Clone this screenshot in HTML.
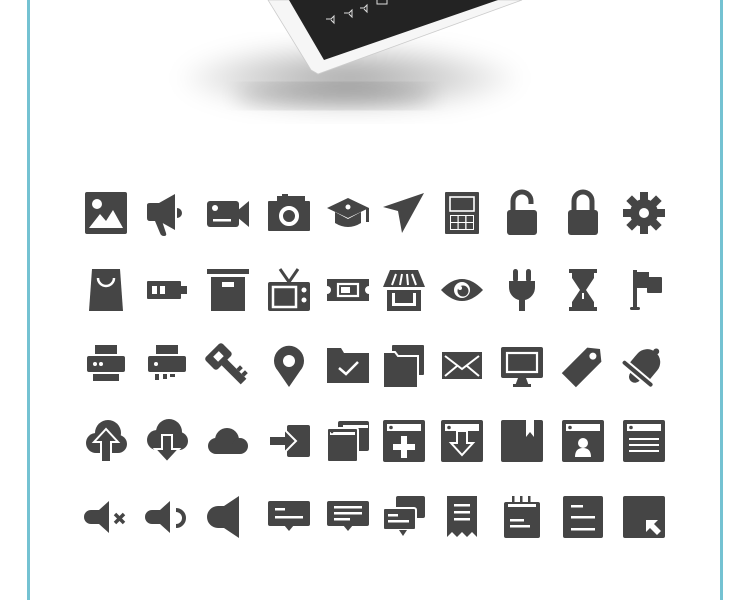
<!DOCTYPE html>
<html><head><meta charset="utf-8"><style>
html,body{margin:0;padding:0;background:#fff;width:750px;height:600px;overflow:hidden}
</style></head><body>
<svg width="750" height="600" viewBox="0 0 750 600" xmlns="http://www.w3.org/2000/svg">
<defs>
<radialGradient id="sh" cx="0.5" cy="0.5" r="0.5">
<stop offset="0" stop-color="#000" stop-opacity="0.35"/>
<stop offset="0.6" stop-color="#000" stop-opacity="0.15"/>
<stop offset="1" stop-color="#000" stop-opacity="0"/>
</radialGradient>
<filter id="bl"><feGaussianBlur stdDeviation="10"/></filter>
</defs>
<rect x="27" y="0" width="3" height="600" fill="#74c2d2"/>
<rect x="720" y="0" width="3" height="600" fill="#74c2d2"/>
<!-- shadow -->
<ellipse cx="350" cy="78" rx="175" ry="38" fill="url(#sh)" filter="url(#bl)"/>
<ellipse cx="335" cy="96" rx="100" ry="12" fill="#000" opacity="0.18" filter="url(#bl)"/>
<!-- tablet -->
<polygon points="268,0 522,0 318,74 311,70" fill="#f6f6f6" stroke="#ccc" stroke-width="0.8"/>
<polygon points="289,0 498,0 324,60" fill="#232323"/>
<g fill="none" stroke="#ddd" stroke-width="1"><path d="M326,19 h5 l3,-3 v7 l-3,-3"/><path d="M344,13 h5 l3,-3 v7 l-3,-3"/><path d="M360,8 h4 l3,-3 v7 l-3,-3"/><rect x="377" y="-3" width="10" height="7"/></g>
<g fill="#454545">
<!-- ROW 1 -->
<g transform="translate(106,213)"><rect x="-21" y="-21" width="42" height="42" rx="2"/><circle cx="-9" cy="-9" r="5" fill="#fff"/><polygon points="-17,15 -6,1 0,8 7,-3 17,15" fill="#fff"/></g>
<g transform="translate(167,213)"><path d="M-20,-8 Q-20,-10 -17,-10 H-8 L8,-19 V17 L-8,8 H-5 L-1,20 Q0,23 -3,23 Q-6,23 -7,20 L-12,8 H-17 Q-20,8 -20,5Z"/><path d="M10,-5 A5,5 0 0 1 10,5Z"/></g>
<g transform="translate(228,213)"><rect x="-21" y="-12" width="32" height="26" rx="3"/><polygon points="9,-2 21,-12 21,14 9,4"/><circle cx="-13" cy="-5" r="3" fill="#fff"/><rect x="-15" y="6" width="18" height="2.5" fill="#fff"/></g>
<g transform="translate(289,213)"><rect x="-21" y="-12" width="42" height="30" rx="1"/><rect x="-12" y="-17" width="28" height="7"/><rect x="-7" y="-19" width="6" height="3"/><circle cx="0" cy="3" r="8" fill="none" stroke="#fff" stroke-width="4"/></g>
<g transform="translate(348,213)"><polygon points="-21,-5 0,-15 21,-5 0,5"/><path d="M-13,-1 L0,6 L13,-1 V10 Q0,18 -13,10Z"/><rect x="18" y="-5" width="3" height="14"/><circle cx="0" cy="-6" r="2.5" fill="#fff"/></g>
<g transform="translate(404,213)"><polygon points="-21,-6 20,-20 -2,20 -6,-2"/></g>
<g transform="translate(462,213)"><rect x="-17" y="-21" width="34" height="42" rx="1"/><rect x="-12" y="-16" width="24" height="14" fill="none" stroke="#fff" stroke-width="1.6"/><rect x="-12" y="2" width="24" height="15" fill="#fff"/><g><rect x="-11" y="3" width="6.5" height="6"/><rect x="-3.3" y="3" width="6.5" height="6"/><rect x="4.5" y="3" width="6.5" height="6"/><rect x="-11" y="10" width="6.5" height="6"/><rect x="-3.3" y="10" width="6.5" height="6"/><rect x="4.5" y="10" width="6.5" height="6"/></g></g>
<g transform="translate(522,213)"><rect x="-15" y="-3" width="30" height="25" rx="3"/><path d="M-9,-3 V-12 A9,9 0 0 1 9,-12 V-9" fill="none" stroke="#454545" stroke-width="5"/></g>
<g transform="translate(583,213)"><rect x="-15" y="-3" width="30" height="25" rx="3"/><path d="M-9,-1 V-12 A9,9 0 0 1 9,-12 V-1" fill="none" stroke="#454545" stroke-width="5"/></g>
<g transform="translate(644,213)"><circle r="14"/><g><rect x="-4" y="-21" width="8" height="42"/><rect x="-4" y="-21" width="8" height="42" transform="rotate(45)"/><rect x="-4" y="-21" width="8" height="42" transform="rotate(90)"/><rect x="-4" y="-21" width="8" height="42" transform="rotate(135)"/></g><circle r="5" fill="#fff"/></g>
<!-- ROW 2 -->
<g transform="translate(106,290)"><polygon points="-14,-21 14,-21 17,21 -17,21"/><path d="M-8,-12 A8,8 0 0 0 8,-12" fill="none" stroke="#fff" stroke-width="2.5"/></g>
<g transform="translate(167,290)"><rect x="-20" y="-9" width="34" height="18" rx="1"/><rect x="13" y="-4" width="7" height="8"/><rect x="-15" y="-4" width="5" height="8" fill="#fff"/><rect x="-7" y="-4" width="5" height="8" fill="#fff"/></g>
<g transform="translate(228,290)"><rect x="-21" y="-21" width="42" height="5"/><rect x="-17" y="-13" width="34" height="34"/><rect x="-6" y="-8" width="12" height="5" fill="#fff"/></g>
<g transform="translate(289,290)"><path d="M-9,-21 L0,-8 L9,-21" fill="none" stroke="#454545" stroke-width="3"/><rect x="-21" y="-8" width="42" height="29" rx="2"/><rect x="-16" y="-3" width="23" height="20" fill="none" stroke="#fff" stroke-width="2.5"/><circle cx="15" cy="0" r="2.5" fill="#fff"/><circle cx="15" cy="10" r="2.5" fill="#fff"/></g>
<g transform="translate(348,290)"><path d="M-21,-11 H21 V-4 A4,4 0 0 0 21,4 V11 H-21 V4 A4,4 0 0 0 -21,-4Z"/><rect x="-10" y="-6" width="20" height="12" fill="none" stroke="#fff" stroke-width="2.2"/><rect x="-7" y="-3" width="9" height="6" fill="#fff"/></g>
<g transform="translate(404,290)"><polygon points="-14,-20 14,-20 21,-3 -21,-3"/><g stroke="#fff" stroke-width="2"><line x1="-8" y1="-16" x2="-12" y2="-5"/><line x1="-2" y1="-16" x2="-4" y2="-5"/><line x1="3" y1="-16" x2="4" y2="-5"/><line x1="8" y1="-16" x2="12" y2="-5"/></g><rect x="-17" y="0" width="34" height="21"/><rect x="-12" y="3" width="24" height="13" fill="#fff"/><rect x="-9" y="3" width="18" height="10"/></g>
<g transform="translate(462,290)"><path d="M-21,0 Q0,-22 21,0 Q0,22 -21,0Z"/><circle r="8" fill="#fff"/><circle cx="1" cy="1" r="5.5"/><circle cx="-2" cy="-2" r="2" fill="#fff"/></g>
<g transform="translate(522,290)"><rect x="-9" y="-21" width="5" height="13" rx="2.5"/><rect x="4" y="-21" width="5" height="13" rx="2.5"/><path d="M-13,-9 H13 V-3 A13,13 0 0 1 3,10 V21 H-3 V10 A13,13 0 0 1 -13,-3Z"/></g>
<g transform="translate(583,290)"><rect x="-14" y="-21" width="28" height="4"/><rect x="-14" y="17" width="28" height="4"/><polygon points="-11,-17 11,-17 11,-12 3,0 11,12 11,17 -11,17 -11,12 -3,0 -11,-12"/><rect x="-1" y="3" width="2" height="6" fill="#fff"/></g>
<g transform="translate(644,290)"><rect x="-11" y="-20" width="4" height="38"/><rect x="-14" y="17" width="10" height="3" rx="1.5"/><rect x="-8" y="-18" width="13" height="16"/><rect x="3" y="-13" width="15" height="16" rx="1"/></g>
<!-- ROW 3 -->
<g transform="translate(106,366)"><rect x="-11" y="-21" width="22" height="9"/><rect x="-19" y="-10" width="38" height="16" rx="2"/><rect x="-13" y="8" width="26" height="7"/><circle cx="-11" cy="-2" r="2" fill="#fff"/><circle cx="-5" cy="-2" r="2" fill="#fff"/></g>
<g transform="translate(167,366)"><rect x="-11" y="-21" width="22" height="9"/><rect x="-19" y="-10" width="38" height="16" rx="2"/><circle cx="-11" cy="-2" r="2" fill="#fff"/><rect x="-12" y="8" width="4" height="6"/><rect x="-4" y="8" width="4" height="5"/><rect x="3" y="8" width="5" height="3"/></g>
<g transform="translate(228,366) rotate(-45)"><rect x="-12" y="-22" width="24" height="17" rx="3"/><rect x="-4" y="-17" width="8" height="7" fill="#fff"/><rect x="-4" y="-6" width="8" height="28"/><rect x="4" y="8" width="5" height="4"/><rect x="4" y="15" width="5" height="4"/></g>
<g transform="translate(289,366)"><path d="M0,21 L-11,5 A15,15 0 1 1 11,5Z"/><circle cx="0" cy="-5" r="6" fill="#fff"/></g>
<g transform="translate(348,366)"><path d="M-21,-18 H-7 L-4,-13 H21 V17 H-21Z"/><polyline points="-9,2 -2,8 10,-4" fill="none" stroke="#fff" stroke-width="2.5"/></g>
<g transform="translate(404,366)"><rect x="-12" y="-21" width="32" height="30" rx="1"/><path d="M-21,-14 H-9 L-6,-10 H14 V22 H-21Z" stroke="#fff" stroke-width="2"/></g>
<g transform="translate(462,366)"><rect x="-20" y="-14" width="40" height="27"/><polyline points="-17,-10 0,3 17,-10" fill="none" stroke="#fff" stroke-width="2"/><line x1="-17" y1="10" x2="-5" y2="0" stroke="#fff" stroke-width="2"/><line x1="17" y1="10" x2="5" y2="0" stroke="#fff" stroke-width="2"/></g>
<g transform="translate(522,366)"><rect x="-21" y="-19" width="42" height="31" rx="2"/><rect x="-15" y="-13" width="30" height="19" fill="none" stroke="#fff" stroke-width="2.2"/><polygon points="-4,12 4,12 7,20 -7,20"/><rect x="-9" y="18" width="18" height="3"/></g>
<g transform="translate(583,366) rotate(45)"><path d="M-10,-16 L0,-24 L10,-16 V20 H-10Z"/><circle cx="0" cy="-14" r="3.5" fill="#fff"/></g>
<g transform="translate(644,366) rotate(40)"><path d="M-13,6 V-5 A13,13 0 0 1 13,-5 V6Z"/><circle cx="0" cy="-19" r="3"/><rect x="-19" y="8" width="38" height="4" rx="2"/><path d="M-6,14 A6,6 0 0 0 6,14Z"/></g>
<!-- ROW 4 -->
<g transform="translate(106,441)"><circle cx="-10" cy="2" r="10"/><circle cx="2" cy="-8" r="13"/><circle cx="12" cy="3" r="9"/><rect x="-10" y="2" width="22" height="10"/><polygon points="0,-12 -12,1 -5,1 -5,21 5,21 5,1 12,1" stroke="#fff" stroke-width="2"/></g>
<g transform="translate(167,441)"><circle cx="-10" cy="-1" r="10"/><circle cx="2" cy="-9" r="13"/><circle cx="12" cy="0" r="9"/><rect x="-10" y="-1" width="22" height="10"/><polygon points="-5,-6 5,-6 5,8 12,8 0,21 -12,8 -5,8" stroke="#fff" stroke-width="2"/></g>
<g transform="translate(228,441)"><circle cx="-12" cy="5" r="8"/><circle cx="-1" cy="-1" r="12"/><circle cx="12" cy="5" r="8"/><rect x="-12" y="4" width="24" height="9"/></g>
<g transform="translate(289,441)"><rect x="-2" y="-16" width="23" height="32" rx="2"/><polygon points="-20,-5 -5,-5 -5,-12 7,0 -5,12 -5,5 -20,5" stroke="#fff" stroke-width="2"/></g>
<g transform="translate(348,441)"><rect x="-10" y="-20" width="31" height="30" rx="2"/><rect x="-5" y="-16" width="25" height="3" fill="#fff"/><rect x="-21" y="-13" width="31" height="34" rx="2" stroke="#fff" stroke-width="2"/><rect x="-18" y="-9" width="25" height="3" fill="#fff"/><circle cx="-16" cy="-9" r="1.3"/></g>
<g transform="translate(404,441)"><rect x="-21" y="-21" width="42" height="42" rx="2"/><rect x="-17" y="-17" width="34" height="7" fill="#fff"/><circle cx="-13" cy="-13.5" r="1.8"/><path d="M-3,-5 H3 V3 H11 V9 H3 V17 H-3 V9 H-11 V3 H-3Z" fill="#fff"/></g>
<g transform="translate(462,441)"><rect x="-21" y="-21" width="42" height="42" rx="2"/><rect x="-17" y="-17" width="34" height="7" fill="#fff"/><circle cx="-13" cy="-13.5" r="1.8"/><polygon points="-5,-10 5,-10 5,2 11,2 0,14 -11,2 -5,2" stroke="#fff" stroke-width="2"/></g>
<g transform="translate(522,441)"><rect x="-21" y="-21" width="42" height="42" rx="2"/><polygon points="4,-21 12,-21 12,-4 8,-9 4,-4" fill="#fff"/></g>
<g transform="translate(583,441)"><rect x="-21" y="-21" width="42" height="42" rx="2"/><rect x="-17" y="-17" width="34" height="7" fill="#fff"/><circle cx="-13" cy="-13.5" r="1.8"/><circle cx="0" cy="2" r="5" fill="#fff"/><path d="M-8,16 Q-8,7 0,7 Q8,7 8,16Z" fill="#fff"/></g>
<g transform="translate(644,441)"><rect x="-21" y="-21" width="42" height="42" rx="2"/><rect x="-17" y="-17" width="34" height="7" fill="#fff"/><circle cx="-13" cy="-13.5" r="1.8"/><g fill="#fff"><rect x="-15" y="-3" width="30" height="2"/><rect x="-15" y="3" width="30" height="2"/><rect x="-15" y="9" width="30" height="2"/></g></g>
<!-- ROW 5 -->
<g transform="translate(106,517)"><path d="M-15,-7 H-7 L3,-16 V16 L-7,7 H-15 A7,7 0 0 1 -15,-7Z"/><path d="M9,-3 L18,6 M18,-3 L9,6" stroke="#454545" stroke-width="3.5"/></g>
<g transform="translate(167,517)"><path d="M-15,-7 H-7 L3,-16 V16 L-7,7 H-15 A7,7 0 0 1 -15,-7Z"/><path d="M9,-7 A8,8 0 0 1 9,9" fill="none" stroke="#454545" stroke-width="4"/></g>
<g transform="translate(228,517)"><path d="M-10,-11 H-4 L11,-21 V21 L-4,11 H-10 A11,11 0 0 1 -10,-11Z"/></g>
<g transform="translate(289,517)"><rect x="-21" y="-16" width="42" height="25" rx="2"/><polygon points="-5,8 5,8 0,14"/><rect x="-14" y="-9" width="10" height="2.5" fill="#fff"/><rect x="-14" y="-1" width="28" height="2.5" fill="#fff"/></g>
<g transform="translate(348,517)"><rect x="-21" y="-16" width="42" height="25" rx="2"/><polygon points="-5,8 5,8 0,14"/><g fill="#fff"><rect x="-14" y="-11" width="28" height="2.5"/><rect x="-14" y="-5" width="28" height="2.5"/><rect x="-14" y="1" width="16" height="2.5"/></g></g>
<g transform="translate(404,517)"><rect x="-8" y="-21" width="29" height="22" rx="2"/><rect x="-21" y="-9" width="33" height="22" rx="2" stroke="#fff" stroke-width="2"/><polygon points="-5,13 3,13 -1,19"/><g fill="#fff"><rect x="-16" y="-3" width="10" height="2.5"/><rect x="-16" y="3" width="21" height="2.5"/></g></g>
<g transform="translate(462,517)"><path d="M-15,-21 H15 V20 L10,15 L5,20 L0,15 L-5,20 L-10,15 L-15,20Z"/><g fill="#fff"><rect x="-8" y="-13" width="16" height="2.5"/><rect x="-8" y="-6" width="16" height="2.5"/><rect x="-8" y="1" width="16" height="2.5"/></g></g>
<g transform="translate(522,517)"><rect x="-18" y="-15" width="36" height="36" rx="2"/><g fill="#454545"><rect x="-10" y="-21" width="2.5" height="6"/><rect x="-2" y="-21" width="2.5" height="6"/><rect x="6" y="-21" width="2.5" height="6"/></g><g fill="#fff"><rect x="-14" y="-13" width="28" height="3"/><rect x="-12" y="2" width="14" height="2.5"/><rect x="-12" y="8" width="20" height="2.5"/></g></g>
<g transform="translate(583,517)"><rect x="-20" y="-21" width="40" height="42" rx="2"/><g fill="#fff"><rect x="-12" y="-12" width="12" height="2.5"/><rect x="-12" y="-1" width="24" height="2.5"/><rect x="-12" y="11" width="24" height="2.5"/></g></g>
<g transform="translate(644,517)"><rect x="-21" y="-21" width="42" height="42" rx="2"/><polygon points="2,3 14,3 10,7 17,14 13,18 6,11 2,15" fill="#fff"/></g>
</g>
</svg>
</body></html>
